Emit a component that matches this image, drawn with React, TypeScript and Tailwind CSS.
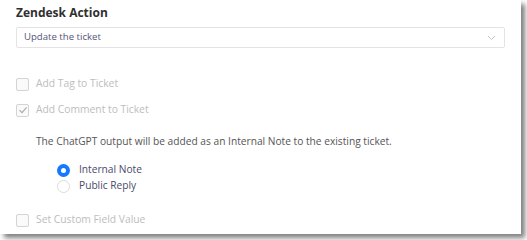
import React from 'react';

const Check = ({ checked, label }: { checked?: boolean; label: string }) => (
  <div className="flex items-center h-[14px]">
    <span className="w-[13px] h-[13px] border border-[#d4d4d4] rounded-[2px] bg-[#fafafa] flex items-center justify-center">
      {checked && (
        <svg width="10" height="10" viewBox="0 0 10 10">
          <path d="M1.5 5.2 L4 7.6 L8.6 2.4" fill="none" stroke="#a8a8a8" strokeWidth="1.1" />
        </svg>
      )}
    </span>
    <span className="ml-[7px] text-[#bdbdbd] text-[10.3px]">{label}</span>
  </div>
);

const Radio = ({ on, label }: { on?: boolean; label: string }) => (
  <div className="flex items-center h-[16px]">
    {on ? (
      <span className="w-[13px] h-[13px] rounded-full bg-[#1677ff] flex items-center justify-center">
        <span className="w-[5px] h-[5px] rounded-full bg-white" />
      </span>
    ) : (
      <span className="w-[13px] h-[13px] rounded-full border border-[#dcdcdc] bg-white" />
    )}
    <span className="ml-[9px] text-[#4a4a6a] text-[10.2px]">{label}</span>
  </div>
);

export default function App() {
  return (
    <div className="w-[527px] h-[240px] bg-white" style={{ fontFamily: '"Open Sans", "Noto Sans", sans-serif' }}>
      <div className="w-[521px] h-[234px] bg-white shadow-[4px_4px_5px_rgba(0,0,0,0.5)] px-[16px] pt-[4px]">
        <div className="text-[12px] font-bold text-[#2f2f2f] leading-[18px]">Zendesk Action</div>
        <div className="mt-[5px] w-[489px] h-[21px] border border-[#e3e3e3] rounded-[2px] flex items-center justify-between pl-[7px] pr-[8px]">
          <span className="text-[9.6px] text-[#55557a]">Update the ticket</span>
          <svg width="9" height="6" viewBox="0 0 9 6">
            <path d="M1 1 L4.5 4.5 L8 1" fill="none" stroke="#c4c4c4" strokeWidth="1" />
          </svg>
        </div>
        <div className="mt-[29px] flex flex-col gap-[12px]">
          <Check label="Add Tag to Ticket" />
          <Check checked label="Add Comment to Ticket" />
        </div>
        <div className="mt-[16px] pl-[20px] text-[10.2px] text-[#555] leading-[16px]">
          The ChatGPT output will be added as an Internal Note to the existing ticket.
        </div>
        <div className="mt-[13px] pl-[41px] flex flex-col gap-0">
          <Radio on label="Internal Note" />
          <Radio label="Public Reply" />
        </div>
        <div className="mt-[19px]">
          <Check label="Set Custom Field Value" />
        </div>
      </div>
    </div>
  );
}
